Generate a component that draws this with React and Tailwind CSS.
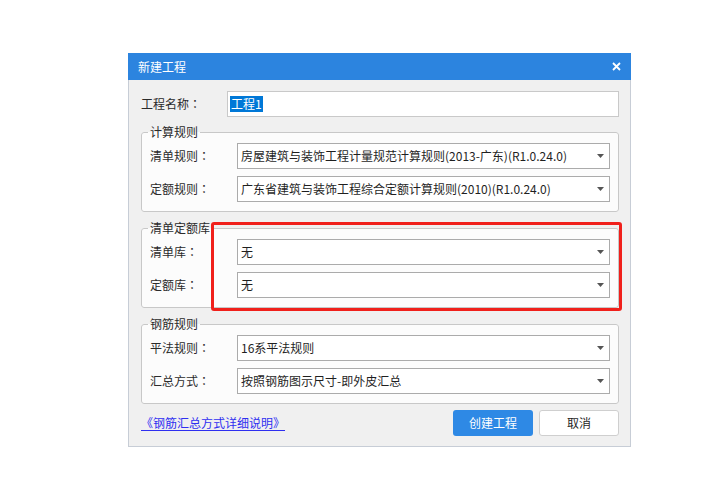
import React from 'react'

const font = "font-['Noto_Sans_CJK_SC','Microsoft_YaHei',sans-serif]"

// 全角冒号居中显示（与原界面字体一致）
function Colon() {
  return <span className="font-['Noto_Sans_CJK_TC',sans-serif]">：</span>
}

function Arrow() {
  return (
    <svg width="7" height="4" viewBox="0 0 7 4" className="shrink-0">
      <path d="M0 0H7L3.5 4Z" fill="#555" />
    </svg>
  )
}

function Select({ value }) {
  return (
    <div className="flex h-[26px] flex-1 items-center justify-between border border-[#ababab] bg-white pl-[3px] pr-[5px]">
      <span className="text-[12px] leading-[16px] text-[#1f1f1f]">{value}</span>
      <Arrow />
    </div>
  )
}

function Row({ label, value }) {
  return (
    <div className="flex items-center">
      <span className="w-[87px] shrink-0 text-[12px] leading-[16px] text-[#2b2b2b]">
        {label}
        <Colon />
      </span>
      <Select value={value} />
    </div>
  )
}

function Group({ title, rows, className = '' }) {
  return (
    <fieldset className={`rounded-[3px] border border-[#c8c8c8] bg-[#fcfcfc] px-[8px] pt-[3px] pb-[9px] ${className}`}>
      <legend className="-ml-[2px] px-[2px] text-[12px] leading-[16px] text-[#2b2b2b]">{title}</legend>
      <div className="flex flex-col gap-[7px]">
        {rows.map(r => (
          <Row key={r[0]} label={r[0]} value={r[1]} />
        ))}
      </div>
    </fieldset>
  )
}

export default function App() {
  return (
    <div className={`min-h-[487px] bg-white pt-[53px] pl-[128px] ${font}`}>
      <div className="relative w-[503px]">
        {/* 标题栏 */}
        <div className="flex h-[27px] items-center justify-between bg-[#2c84df] pl-[10px] pr-[10px]">
          <span className="text-[12px] leading-[16px] text-white">新建工程</span>
          <svg width="9" height="9" viewBox="0 0 9 9">
            <path d="M1 1L8 8M8 1L1 8" stroke="#fff" strokeWidth="1.8" />
          </svg>
        </div>

        <div className="border-x border-b border-[#c7cdd6] bg-[#f0f0f0] pt-[11px] pl-[12px] pr-[11px] pb-[10px]">
          <div className="flex items-center">
            <span className="w-[86px] shrink-0 text-[12px] leading-[16px] text-[#2b2b2b]">
              工程名称
              <Colon />
            </span>
            <div className="flex h-[26px] flex-1 items-center border border-[#c9c9c9] bg-white pl-[2px]">
              <span className="bg-[#0078d7] px-px text-[12px] leading-[16px] text-white">工程1</span>
            </div>
          </div>

          <Group
            className="mt-[7px]"
            title="计算规则"
            rows={[
              ['清单规则', '房屋建筑与装饰工程计量规范计算规则(2013-广东)(R1.0.24.0)'],
              ['定额规则', '广东省建筑与装饰工程综合定额计算规则(2010)(R1.0.24.0)'],
            ]}
          />
          <Group
            className="mt-[8px]"
            title="清单定额库"
            rows={[
              ['清单库', '无'],
              ['定额库', '无'],
            ]}
          />
          <Group
            className="mt-[8px]"
            title="钢筋规则"
            rows={[
              ['平法规则', '16系平法规则'],
              ['汇总方式', '按照钢筋图示尺寸-即外皮汇总'],
            ]}
          />

          <div className="mt-[6px] flex items-center justify-between">
            <a className="text-[12px] leading-[16px] text-[#2f2ff0] underline underline-offset-2">《钢筋汇总方式详细说明》</a>
            <div className="flex gap-[6px]">
              <button className="h-[26px] w-[80px] rounded-[3px] bg-[#2e89e5] text-[12px] text-white">创建工程</button>
              <button className="h-[26px] w-[80px] rounded-[3px] border border-[#cfcfcf] bg-white text-[12px] text-[#1f1f1f]">取消</button>
            </div>
          </div>
        </div>

        {/* 红色标注框 */}
        <div className="pointer-events-none absolute left-[83px] top-[169px] h-[89px] w-[411px] rounded-[3px] border-[3px] border-[#f0201b]" />
      </div>
    </div>
  )
}
